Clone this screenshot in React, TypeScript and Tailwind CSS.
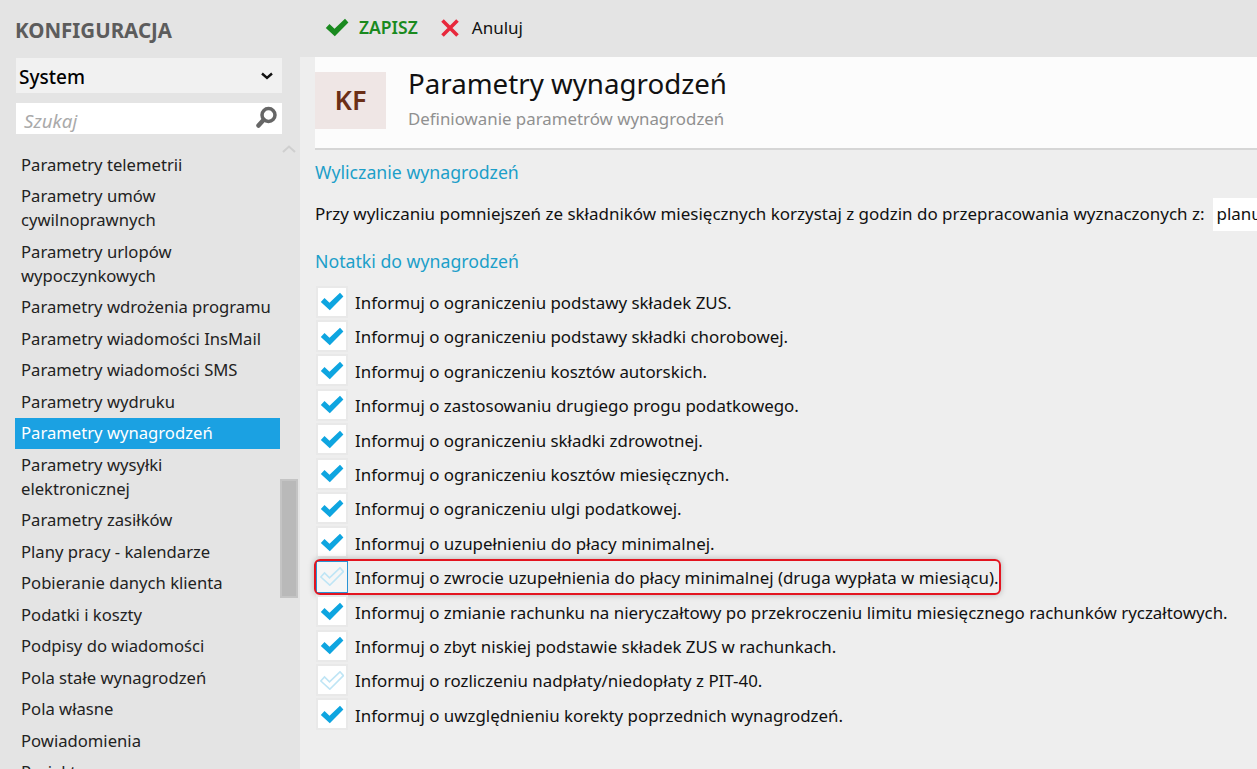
import React from "react";

const menuItems = [
  { label: "Parametry telemetrii" },
  { label: "Parametry umów\ncywilnoprawnych" },
  { label: "Parametry urlopów\nwypoczynkowych" },
  { label: "Parametry wdrożenia programu" },
  { label: "Parametry wiadomości InsMail" },
  { label: "Parametry wiadomości SMS" },
  { label: "Parametry wydruku" },
  { label: "Parametry wynagrodzeń", active: true },
  { label: "Parametry wysyłki\nelektronicznej" },
  { label: "Parametry zasiłków" },
  { label: "Plany pracy - kalendarze" },
  { label: "Pobieranie danych klienta" },
  { label: "Podatki i koszty" },
  { label: "Podpisy do wiadomości" },
  { label: "Pola stałe wynagrodzeń" },
  { label: "Pola własne" },
  { label: "Powiadomienia" },
  { label: "Projekty" },
];

const notes = [
  { label: "Informuj o ograniczeniu podstawy składek ZUS.", on: true },
  { label: "Informuj o ograniczeniu podstawy składki chorobowej.", on: true },
  { label: "Informuj o ograniczeniu kosztów autorskich.", on: true },
  { label: "Informuj o zastosowaniu drugiego progu podatkowego.", on: true },
  { label: "Informuj o ograniczeniu składki zdrowotnej.", on: true },
  { label: "Informuj o ograniczeniu kosztów miesięcznych.", on: true },
  { label: "Informuj o ograniczeniu ulgi podatkowej.", on: true },
  { label: "Informuj o uzupełnieniu do płacy minimalnej.", on: true },
  { label: "Informuj o zwrocie uzupełnienia do płacy minimalnej (druga wypłata w miesiącu).", on: false, marked: true },
  { label: "Informuj o zmianie rachunku na nieryczałtowy po przekroczeniu limitu miesięcznego rachunków ryczałtowych.", on: true },
  { label: "Informuj o zbyt niskiej podstawie składek ZUS w rachunkach.", on: true },
  { label: "Informuj o rozliczeniu nadpłaty/niedopłaty z PIT-40.", on: false },
  { label: "Informuj o uwzględnieniu korekty poprzednich wynagrodzeń.", on: true },
];

function CheckMark({ on }: { on: boolean }) {
  const d = "M0.8 10 L4.5 6 L9.5 10.8 L20 0.8 L23.4 4.6 L9.8 18.2 Z";
  return (
    <svg viewBox="0 0 24 19" className="h-[19px] w-[24px]">
      {on ? (
        <path d={d} fill="#0ea5e0" />
      ) : (
        <path d={d} fill="none" stroke="#bfe5f5" strokeWidth="1.6" />
      )}
    </svg>
  );
}

export default function App() {
  return (
    <div className="flex h-[769px] w-[1257px] overflow-hidden bg-[#e4e4e4] text-[16.9px] text-[#111] [font-family:'Noto_Sans',sans-serif]">
      {/* Sidebar */}
      <aside className="flex w-[300px] shrink-0 flex-col overflow-hidden">
        <h1 className="mt-[17px] h-[26px] pl-[15px] text-[20.5px] leading-[26px] font-bold text-[#5c5c5c]">KONFIGURACJA</h1>
        <div className="mt-[15px] ml-[16px] flex h-[35px] w-[266px] items-center justify-between bg-[#f1f1f1] pr-[9px] pl-[3px] text-[19px] leading-[39px] font-medium text-black">
          <span className="pt-[3px]">System</span>
          <svg viewBox="0 0 12 8" className="h-[8px] w-[12px]">
            <path d="M1 1.5 L6 6 L11 1.5" fill="none" stroke="#111" strokeWidth="2.4" />
          </svg>
        </div>
        <div className="mt-[10px] ml-[16px] flex h-[31px] w-[266px] items-center justify-between bg-white pr-[2px] pl-[8px]">
          <span className="pt-[5px] text-[18.7px] text-[#aaa] italic">Szukaj</span>
          <svg viewBox="0 0 24 24" className="mb-[4px] h-[24px] w-[24px]">
            <circle cx="12.5" cy="10" r="6.5" fill="none" stroke="#666" strokeWidth="3.5" />
            <path d="M7.5 15 L2.5 20.5" stroke="#666" strokeWidth="4.5" strokeLinecap="round" />
          </svg>
        </div>
        <div className="relative mt-[4px] flex min-h-0 flex-1">
          <ul className="ml-[15px] w-[265px] pt-[11px]">
            {menuItems.map((item) => (
              <li
                key={item.label}
                className={`px-[6px] py-[3.75px] text-[16.65px] leading-[24px] whitespace-pre-line ${item.active ? "bg-[#1ba1e2] text-white" : "text-[#222]"}`}
              >
                {item.label}
              </li>
            ))}
          </ul>
          <div className="relative w-[18px]">
            <svg viewBox="0 0 14 8" className="absolute top-[7px] left-[2px] h-[8px] w-[14px]">
              <path d="M1 7 L7 1.5 L13 7" fill="none" stroke="#cfcfcf" strokeWidth="2" />
            </svg>
            <div className="absolute top-[341px] h-[119px] w-[18px] border-2 border-[#c4c4c4] bg-[#b9b9b9]" />
          </div>
        </div>
      </aside>

      {/* Main */}
      <main className="flex min-w-0 flex-1 flex-col">
        <div className="flex h-[57px] shrink-0 items-center pb-[2px] pl-[25px]">
          <svg viewBox="0 0 24 19" className="h-[19px] w-[24px]">
            <path d="M0.8 10 L4.5 6 L9.5 10.8 L20 0.8 L23.4 4.6 L9.8 18.2 Z" fill="#1a8a1f" />
          </svg>
          <span className="ml-[10px] text-[17.5px] font-semibold text-[#1a8a1f]">ZAPISZ</span>
          <svg viewBox="0 0 18 18" className="ml-[23px] h-[18px] w-[18px]">
            <path d="M1.5 1.5 L16.5 16.5 M16.5 1.5 L1.5 16.5" stroke="#e8283c" strokeWidth="3.6" />
          </svg>
          <span className="ml-[13px] text-[17px] text-[#111]">Anuluj</span>
        </div>
        <div className="flex min-h-0 flex-1 flex-col bg-[#eeeeee] pl-[15px]">
          <header className="flex h-[93px] shrink-0 border-b-2 border-[#d6d6d6] bg-[#fcfcfc]">
            <div className="mt-[15px] flex h-[57px] w-[71px] items-center justify-center bg-[#efe6e5] text-[27px] font-semibold text-[#6b2f17]">KF</div>
            <div className="ml-[22px] whitespace-nowrap">
              <div className="mt-[7px] text-[27.7px] leading-[38px] text-[#111]">Parametry wynagrodzeń</div>
              <div className="mt-[6px] text-[16.85px] leading-[22px] text-[#909090]">Definiowanie parametrów wynagrodzeń</div>
            </div>
          </header>
          <div className="mt-[9px] text-[17.7px] leading-[26px] text-[#1c9fc9]">Wyliczanie wynagrodzeń</div>
          <div className="mt-[12px] flex h-[34px] items-center whitespace-nowrap text-[16.98px]">
            <span>Przy wyliczaniu pomniejszeń ze składników miesięcznych korzystaj z godzin do przepracowania wyznaczonych z:</span>
            <span className="ml-[8px] flex h-[33px] w-[60px] shrink-0 items-center bg-white pl-[4px]">planu</span>
          </div>
          <div className="mt-[17px] text-[17.7px] leading-[26px] text-[#1c9fc9]">Notatki do wynagrodzeń</div>
          <div className="mt-[11.4px] flex flex-col">
            {notes.map((note) => (
              <div key={note.label} className="relative flex h-[34.42px] items-center whitespace-nowrap">
                <div
                  className={`mb-[2px] ml-px flex h-[32px] w-[32px] shrink-0 items-center justify-center ${note.marked ? "border border-[#2a93d5] bg-[#f6f6f6]" : "border-2 border-[#e9e9e9] bg-white"}`}
                >
                  <CheckMark on={note.on} />
                </div>
                <span className="ml-[7px]">{note.label}</span>
                {note.marked && (
                  <div className="absolute -top-[1.4px] -left-px h-[36px] w-[687px] rounded-[6px] border-2 border-[#e3141f] shadow-[0_0_6px_rgba(0,0,0,0.25)]" />
                )}
              </div>
            ))}
          </div>
        </div>
      </main>
    </div>
  );
}
